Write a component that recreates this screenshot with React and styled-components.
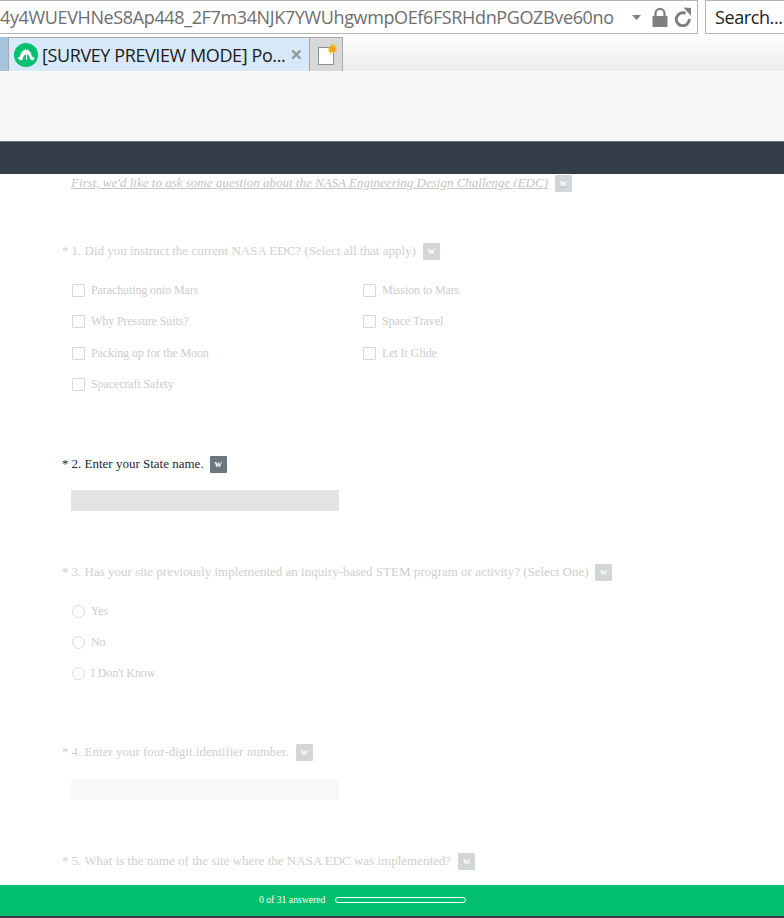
import React from "react";
import styled, { createGlobalStyle } from "styled-components";

const GlobalStyle = createGlobalStyle`
  html, body {
    margin: 0;
    padding: 0;
    background: #fff;
  }
  * {
    box-sizing: border-box;
  }
`;

const Page = styled.div`
  position: relative;
  width: 784px;
  height: 918px;
  overflow: hidden;
  display: flex;
  flex-direction: column;
  background: #fff;
`;

const AddressRow = styled.div`
  display: flex;
  height: 34px;
  background: #fff;
  font-family: "Open Sans", "Noto Sans", sans-serif;
  font-size: 18px;
`;

const UrlBox = styled.div`
  width: 698px;
  height: 34px;
  display: flex;
  align-items: center;
  border: 1px solid #b4b4b4;
  border-left: 0;
  color: #6e6e6e;
  overflow: hidden;
`;

const UrlText = styled.span`
  width: 632px;
  letter-spacing: -0.37px;
  white-space: nowrap;
  overflow: hidden;
  flex: none;
`;

const UrlIcons = styled.div`
  display: flex;
  align-items: center;
`;

const LockWrap = styled.span`
  display: flex;
  margin: 0 6px 0 11px;
`;

const SearchBox = styled.div`
  width: 79px;
  height: 34px;
  margin-left: 7px;
  padding-left: 9px;
  display: flex;
  align-items: center;
  border: 1px solid #b4b4b4;
  border-right: 0;
  color: #222;
  letter-spacing: -0.4px;
  white-space: nowrap;
  overflow: hidden;
`;

const TabRow = styled.div`
  display: flex;
  align-items: flex-end;
  height: 37px;
  background: linear-gradient(#ffffff, #ececec);
  font-family: "Open Sans", "Noto Sans", sans-serif;
`;

const TabStub = styled.div`
  width: 9px;
  height: 34px;
  background: #a5c5de;
  border-right: 1px solid #a9a9a9;
`;

const Tab = styled.div`
  width: 300px;
  height: 34px;
  display: flex;
  align-items: center;
  padding-left: 5px;
  background: #d7e9f9;
  border-top: 1px solid #a9a9a9;
  font-size: 18px;
  color: #1c1c1c;
`;

const TabTitle = styled.span`
  margin: 0 0 0 4px;
  padding-top: 1px;
  width: 248px;
  letter-spacing: -0.4px;
  white-space: nowrap;
`;

const TabClose = styled.span`
  color: #8d9499;
  font-size: 15px;
  font-weight: 700;
  line-height: 1;
`;

const NewTab = styled.div`
  width: 34px;
  height: 34px;
  display: flex;
  align-items: center;
  padding-left: 7px;
  background: #d8d8d8;
  border: 1px solid #a9a9a9;
  border-bottom: 0;
`;

const HeaderBand = styled.div`
  height: 70px;
  background: #f6f6f6;
  border-top: 1px solid #fafafa;
`;

const DarkBar = styled.div`
  height: 33px;
  background: #343e48;
  border-top: 1px solid #70757a;
`;

const Survey = styled.div`
  flex: 1;
  padding: 0 0 0 62px;
  font-family: "Liberation Serif", "Times New Roman", serif;
  font-size: 13px;
  color: #cfcfcf;
`;

const Intro = styled.div`
  display: flex;
  align-items: center;
  height: 18px;
  margin: 0 0 0 9px;
  font-style: italic;
  text-decoration: underline;
  font-size: 13px;
  color: #c4c4c4;
`;

const Question = styled.div`
  display: flex;
  align-items: center;
  height: 18px;
  margin-top: ${(p) => p.$top}px;
  color: ${(p) => (p.$active ? "#1e2a33" : "#cfcfcf")};
`;

const Star = styled.span`
  margin-right: 3px;
`;

const Badge = styled.span`
  width: 17px;
  height: 17px;
  margin-left: ${(p) => (p.$active ? 6 : 7)}px;
  display: flex;
  align-items: center;
  justify-content: center;
  padding-bottom: 1px;
  font-size: 10px;
  font-style: normal;
  font-weight: 700;
  color: #fff;
  background: ${(p) => (p.$active ? "#6b7780" : "#d3d6d8")};
  border-radius: 1px;
`;

const ChoiceGrid = styled.div`
  display: grid;
  grid-template-columns: 291px 291px;
  grid-auto-rows: 31.3px;
  margin: 21.5px 0 0 10px;
`;

const ChoiceList = styled.div`
  display: grid;
  grid-auto-rows: 31px;
  margin: 21px 0 0 10px;
`;

const Choice = styled.label`
  display: flex;
  align-items: center;
  height: 18px;
  font-size: 12px;
  letter-spacing: -0.1px;
  color: #cdcdcd;
`;

const CheckBox = styled.span`
  width: 13px;
  height: 13px;
  margin-right: 6px;
  border: 1px solid #d9d9d9;
  border-radius: 1px;
  flex: none;
`;

const RadioDot = styled(CheckBox)`
  border-radius: 50%;
`;

const TextField = styled.div`
  width: 268px;
  height: 21px;
  margin: ${(p) => p.$top}px 0 0 9px;
  background: ${(p) => (p.$active ? "#e3e3e3" : "#f8f8f8")};
`;

const ProgressFooter = styled.div`
  position: absolute;
  left: 0;
  right: 0;
  bottom: 0;
  height: 33px;
  padding: 0 0 2px 259px;
  display: flex;
  align-items: center;
  background: #00bf6f;
  border-bottom: 2px solid #333e48;
  font-family: "Liberation Serif", "Times New Roman", serif;
  font-size: 9.7px;
  color: #fff;
`;

const ProgressTrack = styled.div`
  width: 131px;
  height: 6px;
  margin-left: 10px;
  border: 1px solid #fff;
  border-radius: 3px;
`;

const Lock = () => (
  <svg width="16" height="19" viewBox="0 0 16 19">
    <path d="M3.500 9V5.500a4.500 4.500 0 0 1 9 0V9" fill="none" stroke="#7e7e7e" strokeWidth="2.200" />
    <rect x="0.500" y="8" width="15" height="11" rx="1" fill="#7e7e7e" />
  </svg>
);

const Reload = () => (
  <svg width="18" height="20" viewBox="0 0 18 20">
    <path d="M11.500 6.300A6.500 6.500 0 1 0 15.300 12" fill="none" stroke="#7e7e7e" strokeWidth="3" />
    <path d="M9.500 0.500l7.500 .5v8z" fill="#7e7e7e" />
  </svg>
);

const Caret = () => (
  <svg width="9" height="5" viewBox="0 0 9 5">
    <path d="M0 0h9L4.500 5z" fill="#7e7e7e" />
  </svg>
);

const Favicon = () => (
  <svg width="24" height="24" viewBox="0 0 24 24">
    <circle cx="12" cy="12" r="12" fill="#00bf6f" />
    <path
      d="M3.500 15.500c.3-1.200 1.300-1.900 2.400-1.800C6.800 9.500 9 6.500 12 6.500s5.200 3 6.100 7.200c1.100-.1 2.100.6 2.400 1.800-.3 1.300-1.400 2-2.700 1.800-1-.3-1.600-1-1.700-2-.5-2.300-2-3.800-3.200-4l.4 5.200h-1.600l.4-5.200c-1.200.2-2.700 1.700-3.200 4-.1 1-.7 1.700-1.700 2-1.300.2-2.400-.5-2.700-1.800z"
      fill="#fff"
    />
  </svg>
);

const NewTabIcon = () => (
  <svg width="21" height="23" viewBox="0 0 21 23">
    <rect x="1.500" y="4.500" width="15" height="17" fill="#fff" stroke="#8f8f8f" />
    <path
      d="M15 0l1.100 3 2.600-1.700-1 2.900 3 .3-2.400 1.800 2 2.300-3-.3-.2 3-2-2.300-2 2.200.1-3-3 .1 2.200-2-2.300-2 3 .1z"
      fill="#f7a90c"
    />
  </svg>
);

const checkColumns = [
  "Parachuting onto Mars",
  "Mission to Mars",
  "Why Pressure Suits?",
  "Space Travel",
  "Packing up for the Moon",
  "Let It Glide",
  "Spacecraft Safety",
];

const radios = ["Yes", "No", "I Don't Know"];

const QuestionTitle = ({ top, active, children }) => (
  <Question $top={top} $active={active}>
    <Star>*</Star>
    {children}
    <Badge $active={active}>w</Badge>
  </Question>
);

export default function App() {
  return (
    <Page>
      <GlobalStyle />
      <AddressRow>
        <UrlBox>
          <UrlText>4y4WUEVHNeS8Ap448_2F7m34NJK7YWUhgwmpOEf6FSRHdnPGOZBve60no</UrlText>
          <UrlIcons>
            <Caret />
            <LockWrap>
              <Lock />
            </LockWrap>
            <Reload />
          </UrlIcons>
        </UrlBox>
        <SearchBox>Search...</SearchBox>
      </AddressRow>
      <TabRow>
        <TabStub />
        <Tab>
          <Favicon />
          <TabTitle>[SURVEY PREVIEW MODE] Po...</TabTitle>
          <TabClose>✕</TabClose>
        </Tab>
        <NewTab>
          <NewTabIcon />
        </NewTab>
      </TabRow>
      <HeaderBand />
      <DarkBar />
      <Survey>
        <Intro>
          First, we'd like to ask some question about the NASA Engineering Design Challenge (EDC)
          <Badge>w</Badge>
        </Intro>
        <QuestionTitle top={50}>1. Did you instruct the current NASA EDC? (Select all that apply)</QuestionTitle>
        <ChoiceGrid>
          {checkColumns.map((label) => (
            <Choice key={label}>
              <CheckBox />
              {label}
            </Choice>
          ))}
        </ChoiceGrid>
        <QuestionTitle top={48.5} active>
          2. Enter your State name.
        </QuestionTitle>
        <TextField $top={17} $active />
        <QuestionTitle top={52}>
          3. Has your site previously implemented an inquiry-based STEM program or activity? (Select One)
        </QuestionTitle>
        <ChoiceList>
          {radios.map((label) => (
            <Choice key={label}>
              <RadioDot />
              {label}
            </Choice>
          ))}
        </ChoiceList>
        <QuestionTitle top={48}>4. Enter your four-digit identifier number.</QuestionTitle>
        <TextField $top={18} />
        <QuestionTitle top={52}>5. What is the name of the site where the NASA EDC was implemented?</QuestionTitle>
      </Survey>
      <ProgressFooter>
        0 of 31 answered
        <ProgressTrack />
      </ProgressFooter>
    </Page>
  );
}
